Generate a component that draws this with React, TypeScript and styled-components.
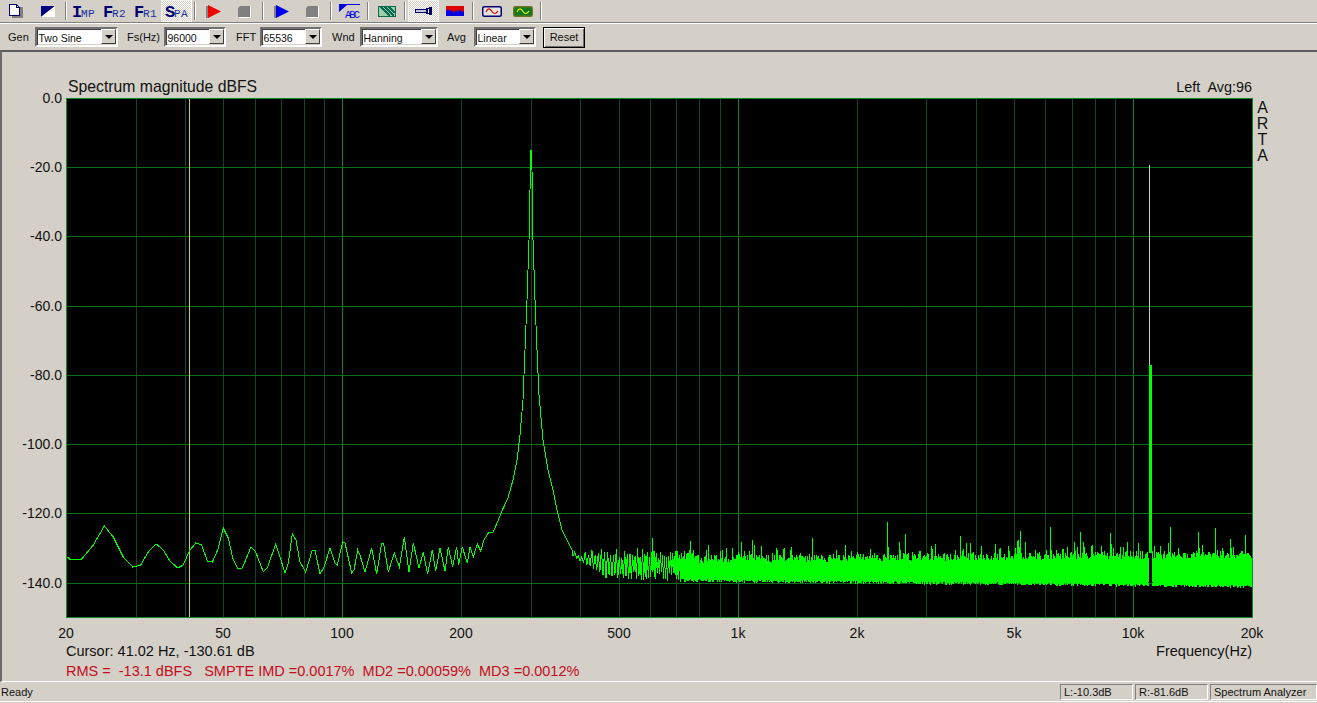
import React from 'react';
import styled, { createGlobalStyle } from 'styled-components';

const FACE = '#d4d0c8';
const SANS = '"Liberation Sans", Arial, sans-serif';

const GlobalStyle = createGlobalStyle`
  html, body { margin: 0; padding: 0; background: ${FACE}; overflow: hidden; }
  body { font-family: ${SANS}; color: #111; }
`;

const Window = styled.div`
  width: 1317px;
  height: 703px;
  display: flex;
  flex-direction: column;
  background: ${FACE};
  overflow: hidden;
`;

const Toolbar = styled.div`
  display: flex;
  height: 22px;
  padding-left: 1px;
  border-bottom: 1px solid #808080;
  box-shadow: 0 1px 0 #fff;
`;

const ToolButton = styled.div<{ $pressed?: boolean }>`
  width: 31px;
  height: 22px;
  flex: none;
  display: flex;
  align-items: center;
  justify-content: center;
  box-sizing: border-box;
  ${p => p.$pressed && `
    border: 1px solid #f2f0ec;
    border-right-color: #fff;
    background-color: #fff;
    background-image:
      linear-gradient(45deg, ${FACE} 25%, transparent 25%, transparent 75%, ${FACE} 75%),
      linear-gradient(45deg, ${FACE} 25%, transparent 25%, transparent 75%, ${FACE} 75%);
    background-size: 2px 2px;
    background-position: 0 0, 1px 1px;
  `}
`;

const Separator = styled.div<{ $narrow?: boolean }>`
  width: ${p => (p.$narrow ? 5 : 6)}px;
  flex: none;
  display: flex;
  justify-content: center;
  &::before {
    content: '';
    width: 1px;
    height: 18px;
    margin-top: 2px;
    background: #808080;
    border-right: 1px solid #fff;
  }
`;

const Caption = styled.span`
  display: flex;
  align-items: baseline;
  margin-top: 2px;
  font-family: "Liberation Mono", monospace;
  color: #000070;
`;

const CaptionBig = styled.span`
  font-size: 17px;
  font-weight: 700;
`;

const CaptionSmall = styled.span`
  font-size: 11px;
  letter-spacing: 0.4px;
  color: #1a2f9c;
  margin-left: -1px;
`;

const Controls = styled.div`
  display: flex;
  align-items: flex-start;
  height: 26px;
  margin-top: 1px;
  padding-top: 3px;
  box-sizing: border-box;
  font-size: 11px;
`;

const Label = styled.div<{ $w: number; $pad?: number }>`
  width: ${p => p.$w}px;
  padding-left: ${p => p.$pad ?? 10}px;
  box-sizing: border-box;
  line-height: 21px;
  flex: none;
`;

const Combo = styled.div<{ $w: number }>`
  width: ${p => p.$w}px;
  height: 20px;
  flex: none;
  box-sizing: border-box;
  display: flex;
  align-items: stretch;
  background: #fff;
  border: 2px solid;
  border-color: #707070 #fff #fff #707070;
  box-shadow: inset 1px 1px 0 #404040, inset -1px -1px 0 ${FACE};
`;

const ComboText = styled.div`
  flex: 1;
  padding-left: 1.5px;
  font-size: 10.5px;
  line-height: 18px;
  overflow: hidden;
  white-space: nowrap;
`;

const ComboArrow = styled.div`
  width: 15px;
  margin: 0 0 1px;
  flex: none;
  display: flex;
  align-items: center;
  justify-content: center;
  background: ${FACE};
  border-left: 1px solid #fff;
  border-top: 1px solid #fff;
  border-right: 1px solid #404040;
  border-bottom: 1px solid #404040;
  box-sizing: border-box;
  &::after {
    content: '';
    border-style: solid;
    border-width: 4px 4px 0;
    border-color: #000 transparent transparent;
  }
`;

const ResetButton = styled.div`
  margin-left: 7px;
  width: 42px;
  height: 21px;
  box-sizing: border-box;
  text-align: center;
  line-height: 18px;
  border: 1px solid #000;
  box-shadow: inset 1px 1px 0 #fff, inset -1px -1px 0 #707070;
`;

const Panel = styled.main`
  flex: 1;
  display: flex;
  flex-direction: column;
  border-top: 2px solid #5c5c5c;
  border-left: 2px solid #6a6a6a;
  border-bottom: 1px solid #fff;
  font-size: 14.5px;
  line-height: 16px;
`;

const TitleRow = styled.div`
  display: flex;
  justify-content: space-between;
  height: 9px;
  margin-top: 27px;
  padding: 0 65px 0 66px;
  white-space: pre;
`;

const ChartTitle = styled.span`
  font-size: 15.75px;
`;

const ChannelInfo = styled.span`
  font-size: 14.4px;
`;

const ChartFrame = styled.svg`
  display: block;
  width: 1315px;
  height: 555px;
  flex: none;
  font-family: ${SANS};
  font-size: 14px;
`;

const FooterRow = styled.div`
  display: flex;
  justify-content: space-between;
  height: 16px;
  padding: 0 65px 0 64px;
  white-space: pre;
`;

const MeasureRow = styled(FooterRow)`
  margin-top: 4px;
  color: #c40c1c;
`;

const StatusBar = styled.footer`
  display: flex;
  align-items: center;
  height: 19px;
  gap: 2px;
  font-size: 11px;
  border-bottom: 1px solid #fff;
  margin-bottom: 1px;
`;

const Ready = styled.div`
  flex: 1;
  padding-left: 1px;
`;

const StatusPane = styled.div<{ $w: number }>`
  width: ${p => p.$w}px;
  height: 16px;
  flex: none;
  box-sizing: border-box;
  padding-left: 3px;
  line-height: 15px;
  border: 1px solid;
  border-color: #808080 #fff #fff #808080;
  white-space: nowrap;
`;

/* ------- spectrum geometry ------- */

const PLOT = { left: 66, right: 1252, top: 98, bottom: 617 };
const freqX = (f: number) => Math.round(PLOT.left + (Math.log10(f / 20) / 3) * (PLOT.right - PLOT.left));
const dbY = (db: number) => Math.round(PLOT.top - db * 3.462);

const DB_LINES = [-20, -40, -60, -80, -100, -120, -140];
const FREQ_LINES: number[] = [];
for (let f = 30; f < 100; f += 10) FREQ_LINES.push(f);
for (let f = 200; f < 1000; f += 100) FREQ_LINES.push(f);
for (let f = 2000; f < 10000; f += 1000) FREQ_LINES.push(f);
const MAJOR_LINES = [100, 1000, 10000];

const X_LABELS: [number, string][] = [
  [20, '20'], [50, '50'], [100, '100'], [200, '200'], [500, '500'],
  [1000, '1k'], [2000, '2k'], [5000, '5k'], [10000, '10k'], [20000, '20k'],
];

// read off the trace by hand, up to where the noise floor starts
const LOW_TRACE: [number, number][] = [
  [66, 556], [70.7, 560], [81.7, 559], [93.3, 545], [104.3, 526], [113.3, 537], [123.3, 557], [132.7, 567],
  [140.7, 565], [148.3, 552], [156.3, 544], [163.3, 550], [170, 561], [177.7, 568], [183.3, 565], [189.3, 551],
  [195.7, 543], [201.7, 545], [207.3, 561], [212.3, 562], [217.7, 550], [223.3, 528], [228.3, 538], [232.7, 558],
  [238, 569], [242.3, 568], [251, 547], [255.7, 552], [263.3, 572], [267.3, 568], [275.7, 544], [280, 557],
  [285, 573], [288.3, 563], [292.3, 534], [296, 540], [300, 562], [305.7, 572], [312.3, 550], [315, 550],
  [320, 574], [324, 567], [330, 548], [335, 563], [337.3, 565], [342.7, 542], [345, 543], [351.7, 573],
  [354, 570], [357.7, 550], [360, 555], [365, 572], [371.7, 548], [376.7, 574], [381.7, 543], [383.5, 543],
  [388.3, 572], [394.3, 553], [399.3, 567], [404.3, 537], [409, 572], [413.3, 543], [419, 568], [423.3, 552],
  [427.7, 574], [432.3, 550], [435.7, 571], [440, 548], [445, 571], [448.3, 547], [452.7, 567], [456.7, 547],
  [458.7, 565], [462.3, 547], [467.3, 563], [470, 547], [473.3, 557], [477.3, 544], [480.7, 551], [484, 540],
  [488.3, 533], [493.3, 532], [498.3, 520], [502.3, 510], [508, 498], [513, 480], [517, 460], [520, 435],
  [523, 400], [525, 350], [527, 300], [529, 240], [530, 190], [531, 150], [532, 170], [533, 240], [535, 300],
  [537, 350], [539, 395], [543, 440], [548, 470], [553, 490], [557, 510], [562, 530], [567, 540], [572, 550],
];

const SPIKES: Record<number, number> = {
  652: 538, 690: 541, 752: 540, 812: 538, 887: 522, 905: 534, 960: 536, 1020: 531, 1050: 527,
  1080: 532, 1110: 533, 1170: 527, 1198: 532, 1215: 528, 1245: 535,
};

function makeRandom(seed: number) {
  let a = seed;
  return () => {
    a = (a + 0x6d2b79f5) | 0;
    let t = Math.imul(a ^ (a >>> 15), 1 | a);
    t = (t + Math.imul(t ^ (t >>> 7), 61 | t)) ^ t;
    return ((t ^ (t >>> 14)) >>> 0) / 4294967296;
  };
}

function buildTrace() {
  const rnd = makeRandom(4711);
  const low = LOW_TRACE.map(([x, y], i) => `${i ? 'L' : 'M'}${x} ${y}`).join(' ');

  // zigzag just above the peak skirt, opening up first, then tightening into the band
  let zig = '';
  let x = 573;
  let up = false;
  while (x < 700) {
    const k = (x - 572) / 128;
    const open = Math.min(1, (x - 572) / 30);
    const top = 548 + rnd() * 10 + (1 - open) * 4;
    const bottom = 555 + open * 13 + rnd() * 10 * open + k * 4;
    zig += ` L${x.toFixed(1)} ${(up ? top : bottom).toFixed(0)}`;
    up = !up;
    x += 1.8 - k * 1.1;
  }

  // solid band: one column per pixel
  let band = '';
  for (let col = 680; col < PLOT.right; col++) {
    const k = (col - 680) / 572;
    let top = 555 - k * 5 + rnd() * 8 - (rnd() < 0.22 ? rnd() * 13 : 0);
    let bottom = 579 + k * 6 + rnd() * 3;
    if (SPIKES[col]) top = SPIKES[col];
    if (col >= 1149 && col <= 1151) {
      top = 365;
      bottom = 553;
    }
    band += ` M${col + 0.5} ${top.toFixed(0)} V${bottom.toFixed(0)}`;
  }
  // sparse spikes left of the band
  let sparse = '';
  Object.keys(SPIKES).forEach(k => {
    const col = Number(k);
    if (col < 680) sparse += ` M${col + 0.5} ${SPIKES[col]} V565`;
  });
  return { low: low + zig, band: band + sparse };
}

const TRACE = buildTrace();

function Spectrum() {
  const cursorX = freqX(41.02);
  return (
    <ChartFrame viewBox="2 88 1315 555">
      <rect x={PLOT.left} y={PLOT.top} width={PLOT.right - PLOT.left} height={PLOT.bottom - PLOT.top} fill="#000" />
      <g shapeRendering="crispEdges" strokeWidth="1" fill="none">
        {FREQ_LINES.map(f => (
          <path key={f} d={`M${freqX(f) + 0.5} ${PLOT.top} V${PLOT.bottom}`} stroke="#0a4a1c" />
        ))}
        {MAJOR_LINES.map(f => (
          <path key={f} d={`M${freqX(f) + 0.5} ${PLOT.top} V${PLOT.bottom}`} stroke="#0a8426" />
        ))}
        {DB_LINES.map(db => (
          <path key={db} d={`M${PLOT.left} ${dbY(db) + 0.5} H${PLOT.right}`} stroke="#0a6e18" />
        ))}
        <path d={`M${cursorX + 0.5} ${PLOT.top} V${PLOT.bottom}`} stroke="#cfcf48" />
        <path d={TRACE.low} stroke="#00ff00" />
        <path d={TRACE.band} stroke="#00ff00" />
        <path d="M1149.5 165 V365" stroke="#b8d8b8" />
        <path d="M1149 560 H1151 M1148 582.5 H1153" stroke="#000" />
        <rect
          x={PLOT.left + 0.5}
          y={PLOT.top + 0.5}
          width={PLOT.right - PLOT.left}
          height={PLOT.bottom - PLOT.top}
          stroke="#0a8a2a"
        />
      </g>
      <g fill="#111">
        <text x="62" y={dbY(0) + 5} textAnchor="end">0.0</text>
        {DB_LINES.map(db => (
          <text key={db} x="62" y={dbY(db) + 5} textAnchor="end">{`${db}.0`}</text>
        ))}
        {X_LABELS.map(([f, label]) => (
          <text key={label} x={freqX(f)} y="638" textAnchor="middle">{label}</text>
        ))}
        <g fontSize="16" textAnchor="middle">
          <text x="1262.5" y="113">A</text>
          <text x="1262.5" y="129">R</text>
          <text x="1262.5" y="145">T</text>
          <text x="1262.5" y="161">A</text>
        </g>
      </g>
    </ChartFrame>
  );
}

/* ------- toolbar drawings ------- */

const Icon = styled.svg`
  display: block;
  flex: none;
  overflow: visible;
`;

const DocIcon = () => (
  <Icon width="15" height="14" viewBox="0 0 15 14" shapeRendering="crispEdges">
    <rect x="3" y="3" width="11" height="11" fill="#808080" />
    <path d="M0.5 0.5 H7.5 L10.5 3.5 V11.5 H0.5 Z" fill="#fff" stroke="#000070" />
    <path d="M7.5 0.5 V3.5 H10.5" fill="none" stroke="#000070" />
  </Icon>
);

const ContrastIcon = () => (
  <Icon width="14" height="11" viewBox="0 0 14 11">
    <path d="M0 0 H14 L14 0 L0 11 Z" fill="#000080" />
    <path d="M14 0 V11 H0 Z" fill="#fff" />
  </Icon>
);

const PlayIcon = ({ color }: { color: string }) => (
  <Icon width="15" height="13" viewBox="0 0 15 13">
    <path d="M0 1 L3 1 V13 H0 Z" fill="#808080" />
    <path d="M2 0 L15 6.5 L2 13 Z" fill={color} />
  </Icon>
);

const StopIcon = () => (
  <Icon width="13" height="13" viewBox="0 0 13 13">
    <path d="M2 1 H12 V12 H0 V3 Z" fill="#808080" />
    <path d="M12.5 1 V12.5 H1" fill="none" stroke="#fff" />
  </Icon>
);

const AbcIcon = () => (
  <Icon width="22" height="14" viewBox="0 0 22 14">
    <path d="M0 0 H21 V1 H8 L0 8 Z" fill="#0000e0" />
    <text x="6" y="13.5" fontFamily='"Liberation Mono", monospace' fontSize="10.5" fill="#0000e0" textLength="15">ABC</text>
  </Icon>
);

const PrintIcon = () => (
  <Icon width="18" height="11" viewBox="0 0 18 11" shapeRendering="crispEdges">
    <rect x="0.5" y="0.5" width="17" height="10" fill="#9ad0a8" stroke="#0a6a50" />
    <path d="M3 1 L12 10 M7 1 L16 10 M11 1 L17 7" stroke="#0a6a50" strokeWidth="2" />
  </Icon>
);

const FlashlightIcon = () => (
  <Icon width="18" height="8" viewBox="0 0 18 8" shapeRendering="crispEdges">
    <rect x="0.5" y="2.5" width="11" height="3" fill="#c8c8d8" stroke="#000070" />
    <path d="M11 1 H14 V0 H17 V8 H14 V7 H11 Z" fill="#000070" />
    <rect x="13" y="2" width="1" height="4" fill="#fff" />
  </Icon>
);

const SpectrumIcon = () => (
  <Icon width="18" height="10" viewBox="0 0 18 10">
    <rect width="18" height="10" fill="#0000e0" />
    <path d="M0 0 H18 V5 L16 6 L14 3 L12 6 L10 4 L8 7 L6 4 L4 5 L2 3 L0 5 Z" fill="#e00000" />
  </Icon>
);

const ScopeIcon = ({ frame, screen, wave }: { frame: string; screen: string; wave: string }) => (
  <Icon width="20" height="11" viewBox="0 0 20 11">
    <rect x="0.75" y="0.75" width="18.5" height="9.5" rx="1.5" fill={screen} stroke={frame} strokeWidth="1.5" />
    <path d="M4 6 C6 1.5 8 2.5 10 5.5 C12 8.5 14 8 16 5" fill="none" stroke={wave} strokeWidth="1.2" />
  </Icon>
);

const ToolCaption = ({ big, small }: { big: string; small: string }) => (
  <Caption>
    <CaptionBig>{big}</CaptionBig>
    <CaptionSmall>{small}</CaptionSmall>
  </Caption>
);

const Select = ({ w, value }: { w: number; value: string }) => (
  <Combo $w={w}>
    <ComboText>{value}</ComboText>
    <ComboArrow />
  </Combo>
);

export default function App() {
  return (
    <Window>
      <GlobalStyle />
      <Toolbar>
        <ToolButton><DocIcon /></ToolButton>
        <ToolButton><ContrastIcon /></ToolButton>
        <Separator $narrow />
        <ToolButton><ToolCaption big="I" small="MP" /></ToolButton>
        <ToolButton><ToolCaption big="F" small="R2" /></ToolButton>
        <ToolButton><ToolCaption big="F" small="R1" /></ToolButton>
        <ToolButton $pressed><ToolCaption big="S" small="PA" /></ToolButton>
        <Separator />
        <ToolButton><PlayIcon color="#f00000" /></ToolButton>
        <ToolButton><StopIcon /></ToolButton>
        <Separator />
        <ToolButton><PlayIcon color="#0000f0" /></ToolButton>
        <ToolButton><StopIcon /></ToolButton>
        <Separator />
        <ToolButton><AbcIcon /></ToolButton>
        <Separator />
        <ToolButton><PrintIcon /></ToolButton>
        <Separator />
        <ToolButton $pressed><FlashlightIcon /></ToolButton>
        <ToolButton><SpectrumIcon /></ToolButton>
        <Separator />
        <ToolButton><ScopeIcon frame="#000070" screen="#e8e4dc" wave="#e00000" /></ToolButton>
        <ToolButton><ScopeIcon frame="#707020" screen="#0a7a1a" wave="#f0f000" /></ToolButton>
        <Separator />
      </Toolbar>

      <Controls>
        <Label $w={35} $pad={8}>Gen</Label>
        <Select w={83} value="Two Sine" />
        <Label $w={46} $pad={9}>Fs(Hz)</Label>
        <Select w={62} value="96000" />
        <Label $w={34}>FFT</Label>
        <Select w={62} value="65536" />
        <Label $w={38}>Wnd</Label>
        <Select w={78} value="Hanning" />
        <Label $w={36} $pad={9}>Avg</Label>
        <Select w={62} value="Linear" />
        <ResetButton>Reset</ResetButton>
      </Controls>

      <Panel>
        <TitleRow>
          <ChartTitle>Spectrum magnitude dBFS</ChartTitle>
          <ChannelInfo>Left  Avg:96</ChannelInfo>
        </TitleRow>
        <Spectrum />
        <FooterRow>
          <span>Cursor: 41.02 Hz, -130.61 dB</span>
          <span>Frequency(Hz)</span>
        </FooterRow>
        <MeasureRow>
          <span>RMS =  -13.1 dBFS   SMPTE IMD =0.0017%  MD2 =0.00059%  MD3 =0.0012%</span>
        </MeasureRow>
      </Panel>

      <StatusBar>
        <Ready>Ready</Ready>
        <StatusPane $w={73}>L:-10.3dB</StatusPane>
        <StatusPane $w={73}>R:-81.6dB</StatusPane>
        <StatusPane $w={107}>Spectrum Analyzer</StatusPane>
      </StatusBar>
    </Window>
  );
}
